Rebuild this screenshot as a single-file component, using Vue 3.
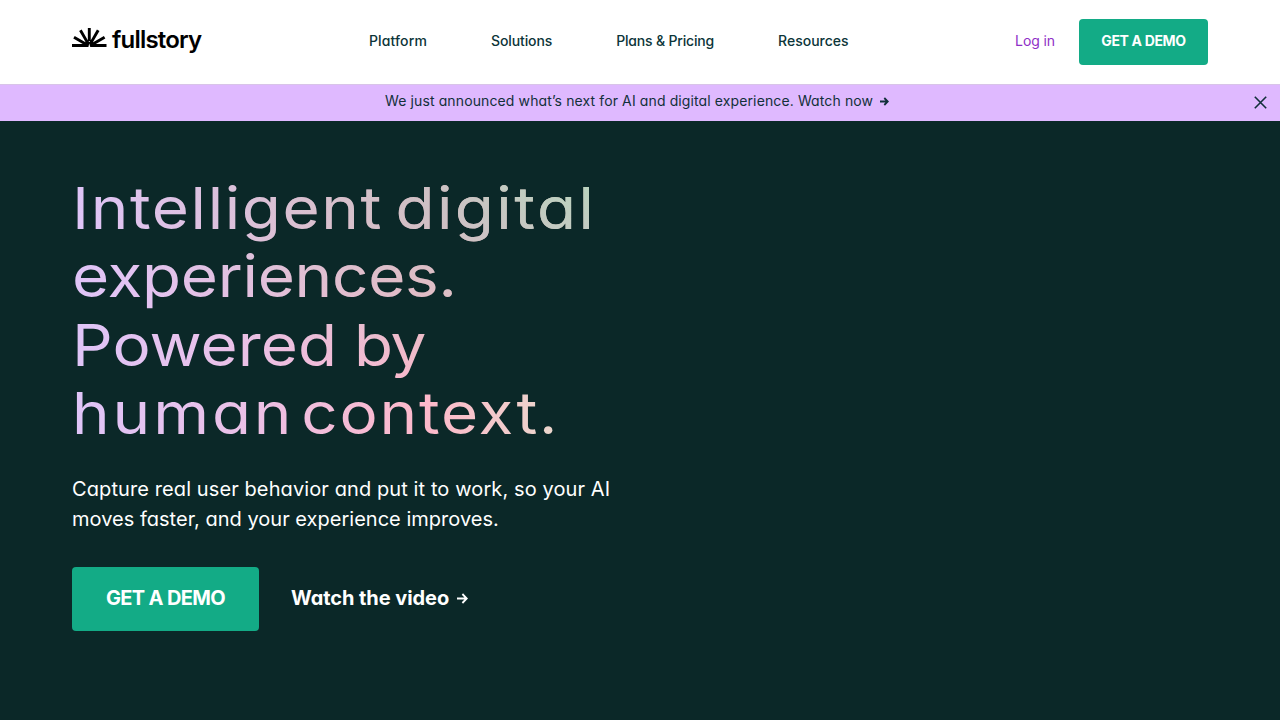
<script setup>
const links = [
  { label: "Platform", name: "platform" },
  { label: "Solutions", name: "solutions" },
  { label: "Plans & Pricing", name: "pricing" },
  { label: "Resources", name: "resources" },
];

const headline = [
  ["Intelligent", "digital"],
  ["experiences."],
  ["Powered", "by"],
  ["human", "context."],
];
</script>

<template>
  <div class="page">
    <header class="header">
      <a class="logo">
        <svg class="logo-mark" width="35" height="20" viewBox="0 0 35 20">
          <path
            d="M0 17.5H34.5M17.3 0V13M8.4 2.2L15.4 14.4M26.2 2.2L19.2 14.4M2 9.3L14.5 16.5M32.6 9.3L20.1 16.5"
            fill="none"
            stroke="#000"
            stroke-width="2.9"
          />
          <path d="M14.4 11.5L17.3 14L20.2 11.5L22 17H12.6Z" fill="#000" />
          <path d="M16.3 19.2L17.3 15.4L18.3 19.2Z" fill="#fff" />
        </svg>
        <span class="logo-text">fullstory</span>
      </a>
      <nav class="nav">
        <a v-for="link in links" :key="link.name" :class="link.name">{{ link.label }}</a>
      </nav>
      <div class="actions">
        <a class="login">Log in</a>
        <a class="btn btn-small"><span>GET A DEMO</span></a>
      </div>
    </header>

    <div class="banner">
      <span class="banner-text">We just announced what’s next for AI and digital experience. Watch now</span>
      <svg class="banner-arrow" width="9" height="9" viewBox="0 0 9 9">
        <path d="M0 4.5H7.5M4.3 1L7.8 4.5L4.3 8" fill="none" stroke="#12303a" stroke-width="1.8" />
      </svg>
      <svg class="close" width="13" height="13" viewBox="0 0 13 13">
        <path d="M.8 .8L12.2 12.2M12.2 .8L.8 12.2" fill="none" stroke="#12303a" stroke-width="1.6" />
      </svg>
    </div>

    <main class="hero">
      <h1>
        <span v-for="(words, i) in headline" :key="i" class="line" :class="`line-${i + 1}`">
          <template v-for="(word, j) in words" :key="word">{{ j ? " " : "" }}<span :class="`word-${j + 1}`">{{ word }}</span></template>
        </span>
      </h1>
      <p>
        <span class="copy-one">Capture real user behavior and put it to work, so your AI</span>
        <span class="copy-two">moves faster, and your experience improves.</span>
      </p>
      <div class="cta">
        <a class="btn btn-large"><span>GET A DEMO</span></a>
        <a class="video">
          <span>Watch the video</span>
          <svg width="11" height="11" viewBox="0 0 11 11">
            <path d="M0 5.5H9.5M5.4 1L9.8 5.5L5.4 10" fill="none" stroke="#fff" stroke-width="1.8" />
          </svg>
        </a>
      </div>
    </main>
  </div>
</template>

<style>
body {
  margin: 0;
  overflow: hidden;
}
</style>

<style scoped>
.page {
  height: 720px;
  display: flex;
  flex-direction: column;
  background: #0b2828;
  font-family: Inter, "Liberation Sans", sans-serif;
  font-feature-settings: "cv11";
  white-space: nowrap;
}
.header {
  height: 84px;
  box-sizing: border-box;
  padding: 0 72px;
  display: grid;
  grid-template-columns: 297px 1fr auto;
  background: #fff;
  color: #0c3539;
  font-size: 14px;
  line-height: 20px;
}
.logo {
  display: flex;
  align-items: flex-start;
  padding-top: 28px;
  color: #000;
}
.logo-text {
  margin: -2px 0 0 5px;
  font-size: 24px;
  line-height: 28px;
  font-weight: 600;
  letter-spacing: -0.8px;
}
.nav {
  display: flex;
  gap: 64px;
  padding-top: 31px;
  font-weight: 500;
}
.platform {
  letter-spacing: 0.12px;
}
.solutions {
  letter-spacing: -0.1px;
}
.pricing {
  letter-spacing: -0.18px;
}
.actions {
  display: flex;
  gap: 24px;
  padding-top: 19px;
}
.login {
  padding-top: 12px;
  color: #8f2fc7;
  letter-spacing: -0.1px;
}
.btn {
  display: flex;
  justify-content: center;
  box-sizing: border-box;
  border-radius: 4px;
  background: #13ab86;
  color: #fff;
  font-weight: 700;
}
.btn-small {
  width: 129px;
  height: 46px;
  padding-top: 12px;
  letter-spacing: -0.35px;
}
.banner {
  height: 37px;
  box-sizing: border-box;
  border-top: 1px solid #d8c4e8;
  padding: 6px 13px 0 385px;
  display: flex;
  background: #dfb9ff;
  color: #12303a;
  font-size: 14px;
  line-height: 20px;
}
.banner-text {
  letter-spacing: 0.115px;
}
.banner-arrow {
  margin: 6px 0 0 7px;
}
.close {
  margin: 5px 0 0 auto;
}
.hero {
  padding: 53px 72px 0;
  color: #fff;
}
/* widened horizontally for a broader display face */
h1 {
  width: 498px;
  margin: 0;
  transform: scaleX(1.1);
  transform-origin: left;
  font-size: 58px;
  line-height: 68.4px;
  font-weight: 400;
  color: transparent;
  background: radial-gradient(ellipse 100% 85% at 100% 0, #b6d6bc 0%, rgba(192, 194, 194, 0.8) 35%, rgba(235, 190, 210, 0) 100%),
    linear-gradient(90deg, #dfc5f8 0%, #eac1e8 30%, #fdb9ca 65%, #ead9cd 90%);
  -webkit-background-clip: text;
  background-clip: text;
}
.line,
p span {
  display: block;
  width: max-content;
}
.line-1 {
  letter-spacing: 1.44px;
  word-spacing: -6.4px;
}
.line-1 .word-2 {
  letter-spacing: 2.2px;
}
.line-2 {
  letter-spacing: -0.25px;
}
.line-3 {
  letter-spacing: 0;
  word-spacing: -0.9px;
}
.line-3 .word-2 {
  letter-spacing: -1.2px;
}
.line-4 {
  letter-spacing: 2.6px;
  word-spacing: -12.6px;
}
.line-4 .word-2 {
  letter-spacing: 1.6px;
}
p {
  margin: 26px 0 0;
  font-size: 20px;
  line-height: 30px;
}
.copy-one {
  letter-spacing: 0.1px;
}
.copy-two {
  letter-spacing: 0.02px;
}
.cta {
  display: flex;
  gap: 32px;
  margin-top: 33px;
  font-size: 20px;
  line-height: 28px;
}
.btn-large {
  width: 187px;
  height: 64px;
  padding-top: 17px;
  letter-spacing: -0.65px;
}
.video {
  display: flex;
  padding-top: 17px;
  font-weight: 700;
  letter-spacing: -0.07px;
}
.video svg {
  margin: 9px 0 0 8px;
}
</style>
